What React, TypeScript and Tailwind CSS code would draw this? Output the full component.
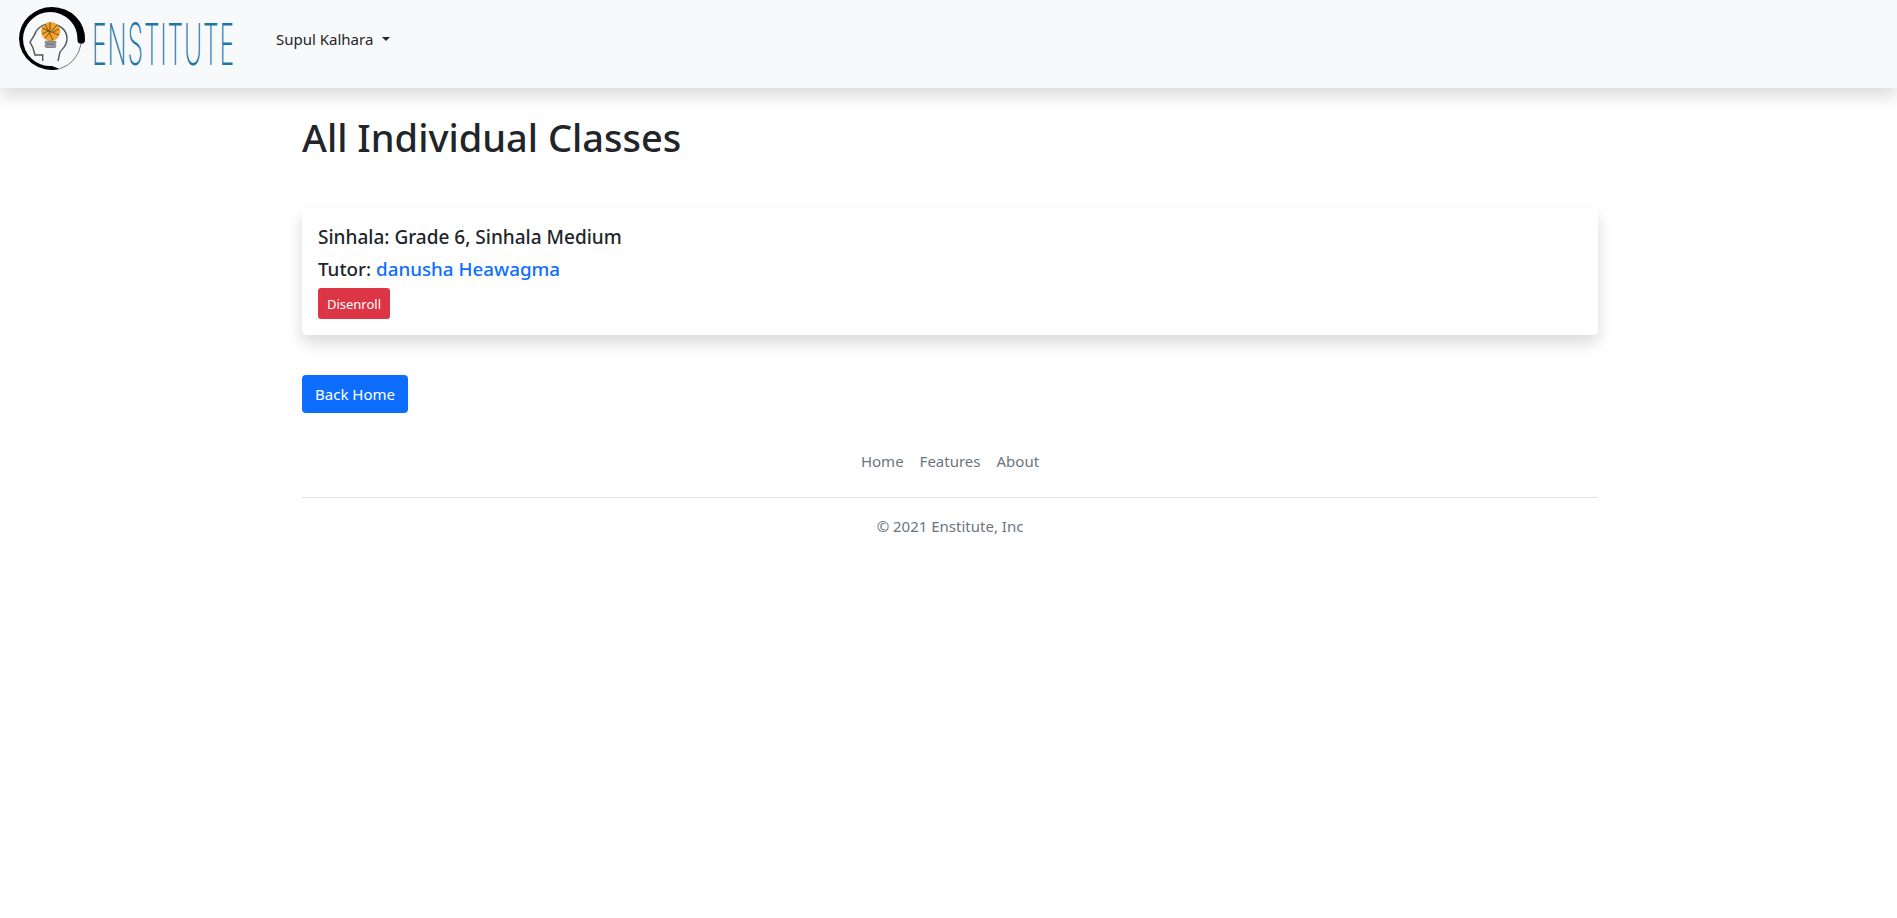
const sans = "font-['Noto_Sans',sans-serif]";

function LogoMark() {
  return (
    <svg viewBox="0 0 90 80" className="h-20 w-[90px] shrink-0 self-start">
      {/* tapered ring */}
      <path
        d="M60 69 A33 31.5 0 0 1 19 38.5 A33 31.5 0 0 1 52 7 A33 31.5 0 0 1 85 40 A3.75 3.75 0 0 1 77.5 40 A27.25 27 0 0 0 50.25 12 A27.25 27 0 0 0 23 39 A27.25 27 0 0 0 52 66 Z"
        fill="#000"
      />
      <path d="M81 44 A31 31 0 0 1 60 68.8" fill="none" stroke="#555" strokeWidth="0.8" />
      {/* head */}
      <path
        d="M42.7 61 V55 H35 L33 48 L30 42 L34.5 35 C36 29 42 24 50 24 C60 24 67 30 67 39 C67 46 62 49 60 52 L58 61"
        fill="none"
        stroke="#555"
        strokeWidth="1.4"
      />
      {/* bulb */}
      <circle cx="50.7" cy="31.5" r="9.5" fill="#f2a32c" />
      <path
        d="M42 28 L59 35 M45 24 L53 40 M57 25 L45 38 M50 22 L50 30 L42 34 M53 32 L59 29"
        fill="none"
        stroke="#5a3a10"
        strokeWidth="0.8"
      />
      <rect x="45" y="41" width="11" height="3" rx="1.5" fill="#9a9a9a" stroke="#444" strokeWidth="0.5" />
      <rect x="45" y="44.5" width="11" height="3" rx="1.5" fill="#9a9a9a" stroke="#444" strokeWidth="0.5" />
    </svg>
  );
}

export default function App() {
  return (
    <div className={`min-h-[918px] bg-white text-[#212529] ${sans}`}>
      <nav className="flex h-[88px] items-center bg-[#f8f9fa] shadow-[0_8px_16px_rgba(0,0,0,0.15)]">
        <LogoMark />
        <div className="ml-[2px] w-[143px] shrink-0">
          <span className="inline-block origin-left scale-x-[0.43] whitespace-nowrap font-['Inter',sans-serif] text-[58px] leading-none font-extralight tracking-[2px] text-[#1f77a6]">
            ENSTITUTE
          </span>
        </div>
        <div className="mb-[10px] ml-[41px] flex items-center gap-[9px] text-[15px]">
          <span>Supul Kalhara</span>
          <span className="h-0 w-0 border-x-[4.5px] border-t-[4.5px] border-x-transparent border-t-[#212529]" />
        </div>
      </nav>

      <main className="ml-[302px] w-[1296px]">
        <h1 className="mt-[25px] mb-[47px] text-[38px] leading-[48px] font-medium">All Individual Classes</h1>

        <div className="rounded-[5px] bg-white p-4 shadow-[0_8px_16px_rgba(0,0,0,0.15)]">
          <h5 className="mb-2 pt-[2px] text-[19px] leading-[22px] font-medium">Sinhala: Grade 6, Sinhala Medium</h5>
          <h5 className="mb-2 pt-[2px] text-[18.8px] leading-[22px] font-medium">
            Tutor: <a className="text-[#0d6efd]">danusha Heawagma</a>
          </h5>
          <button className="block h-[31px] w-[72px] rounded-[3px] bg-[#dc3545] pt-[2px] text-[13px] text-white">Disenroll</button>
        </div>

        <button className="mt-10 block h-[38px] w-[106px] rounded-[4px] bg-[#0d6efd] text-[15px] text-white">Back Home</button>

        <footer className="mt-[28px]">
          <ul className="flex justify-center gap-4 border-b border-[#dee2e6] pt-2 pb-6 text-[15px] leading-6 text-[#6c757d]">
            <li>Home</li>
            <li>Features</li>
            <li>About</li>
          </ul>
          <p className="mt-4 text-center text-[15px] leading-6 text-[#6c757d]">© 2021 Enstitute, Inc</p>
        </footer>
      </main>
    </div>
  );
}
